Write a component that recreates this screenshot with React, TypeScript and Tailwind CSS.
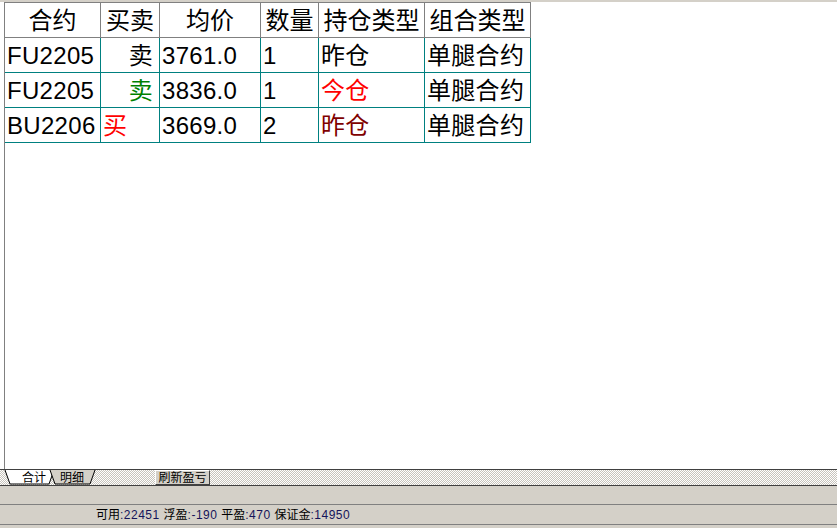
import React from "react";

type Cell = { text: string; color?: string; align?: "left" | "right" | "center" };

const widths = ["w-[96px]", "w-[59px]", "w-[101px]", "w-[58px]", "w-[106px]", "w-[106px]"];

const header = ["合约", "买卖", "均价", "数量", "持仓类型", "组合类型"];

const rows: Cell[][] = [
  [
    { text: "FU2205" },
    { text: "卖", align: "right" },
    { text: "3761.0" },
    { text: "1" },
    { text: "昨仓" },
    { text: "单腿合约" },
  ],
  [
    { text: "FU2205" },
    { text: "卖", align: "right", color: "text-[#008000]" },
    { text: "3836.0" },
    { text: "1" },
    { text: "今仓", color: "text-[#ff0000]" },
    { text: "单腿合约" },
  ],
  [
    { text: "BU2206" },
    { text: "买", color: "text-[#ff0000]" },
    { text: "3669.0" },
    { text: "2" },
    { text: "昨仓", color: "text-[#800000]" },
    { text: "单腿合约" },
  ],
];

function Tabs() {
  return (
    <div className="relative w-[96px] h-[15px] ml-[4px]">
      <svg className="absolute inset-0" width="96" height="15" viewBox="0 0 96 15">
        <polygon points="1,0 6,14 45,14 50,0" fill="#ffffff" />
        <polyline points="1,0 6,14 45,14 50,0" fill="none" stroke="#000" strokeWidth="1" />
        <polygon points="46,0 51,14 86,14 91,0" fill="#d4d0c8" />
        <polyline points="46,0 51,14 86,14 91,0" fill="none" stroke="#000" strokeWidth="1" />
      </svg>
      <div className="relative flex h-[15px] items-center text-[12px] leading-none text-black">
        <span className="ml-[18px]">合计</span>
        <span className="ml-[14px]">明细</span>
      </div>
    </div>
  );
}

export default function App() {
  return (
    <div className="w-[837px] h-[528px] bg-white overflow-hidden flex flex-col font-['Liberation_Sans','Noto_Sans_CJK_SC',sans-serif] text-black">
      <div className="h-[2px] bg-[#d4d0c8] shrink-0" />
      <div className="h-[467px] shrink-0 flex">
        <div className="w-[4px] bg-white" />
        <div className="flex-1 border-l border-[#808080]">
          <div className="flex border-t border-[#808080] w-[526px]">
            {header.map((h, i) => (
              <div
                key={h}
                className={`${widths[i]} h-[35px] border-r border-b border-[#808080] flex items-center justify-center pt-[1px] text-[24px] leading-none`}
              >
                {h}
              </div>
            ))}
          </div>
          {rows.map((r, ri) => (
            <div key={ri} className="flex w-[526px]">
              {r.map((c, ci) => (
                <div
                  key={ci}
                  className={`${widths[ci]} h-[35px] border-r border-b border-[#008080] flex items-center pt-[2px] text-[24px] leading-none tracking-[0.3px] ${
                    c.align === "right" ? "justify-end pr-[6px]" : "justify-start pl-[2px]"
                  } ${c.color ?? "text-black"}`}
                >
                  {c.text}
                </div>
              ))}
            </div>
          ))}
        </div>
      </div>
      <div className="h-[1px] bg-[#404040] shrink-0" />
      <div className="h-[15px] shrink-0 flex items-start bg-[repeating-conic-gradient(#c8c4bc_0%_25%,#ffffff_0%_50%)] bg-[length:2px_2px]">
        <Tabs />
        <div className="ml-[55px] w-[55px] h-[15px] bg-[#d4d0c8] border-t border-l border-t-white border-l-white border-r border-b border-r-[#404040] border-b-[#404040] flex items-center justify-center text-[12px] leading-none">
          刷新盈亏
        </div>
      </div>
      <div className="h-[1px] bg-[#404040] shrink-0" />
      <div className="h-[18px] bg-[#d4d0c8] shrink-0" />
      <div className="h-[1px] bg-[#808080] shrink-0" />
      <div className="h-[19px] bg-[#d4d0c8] shrink-0 flex items-center pl-[96px] text-[12px] leading-none whitespace-pre">
        <span>可用</span>
        <span className="text-[#14145a] tracking-[0.5px]">:22451 </span>
        <span>浮盈</span>
        <span className="text-[#14145a] tracking-[0.5px]">:-190 </span>
        <span>平盈</span>
        <span className="text-[#14145a] tracking-[0.5px]">:470 </span>
        <span>保证金</span>
        <span className="text-[#14145a] tracking-[0.5px]">:14950</span>
      </div>
      <div className="h-[1px] bg-[#808080] shrink-0" />
      <div className="flex-1 bg-[#d4d0c8]" />
    </div>
  );
}
